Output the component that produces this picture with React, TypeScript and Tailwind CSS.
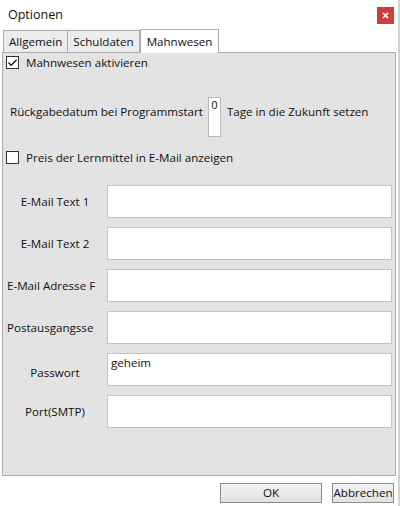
import { Check, X } from "lucide-react";

const fields = [
  { label: "E-Mail Text 1", value: "", align: "center" },
  { label: "E-Mail Text 2", value: "", align: "center" },
  { label: "E-Mail Adresse F", value: "", align: "left" },
  { label: "Postausgangsse", value: "", align: "left" },
  { label: "Passwort", value: "geheim", align: "center" },
  { label: "Port(SMTP)", value: "", align: "center" },
];

function Checkbox({ checked, label }: { checked: boolean; label: string }) {
  return (
    <div className="flex h-[17px] items-center gap-[7px]">
      <div className="flex h-[13px] w-[13px] items-center justify-center border border-[#333] bg-white">
        {checked && <Check className="h-[12px] w-[12px] text-[#1c1c3a]" strokeWidth={3.2} />}
      </div>
      <span>{label}</span>
    </div>
  );
}

export default function App() {
  return (
    <div
      className="relative flex h-[506px] w-[400px] flex-col overflow-hidden border-r-[2px] border-[#d4d4d4] bg-white text-[11.6px] leading-[17px] text-[#111]"
      style={{ fontFamily: '"Open Sans", "Noto Sans", sans-serif' }}
    >
      {/* Title bar */}
      <div className="flex h-[28px] items-start justify-between pl-[8px] pr-[4px] pt-[6px]">
        <span className="text-[12.5px]">Optionen</span>
        <div className="mt-[1px] flex h-[17px] w-[17px] items-center justify-center bg-[#c9403c]">
          <X className="h-[9px] w-[9px] text-white" strokeWidth={4} />
        </div>
      </div>

      {/* Tabs */}
      <div className="flex h-[24px] items-end pl-[3px]">
        <div className="flex h-[22px] items-center border border-b-0 border-[#acacac] bg-[#ececec] px-[5px]">
          Allgemein
        </div>
        <div className="flex h-[22px] items-center border border-b-0 border-l-0 border-[#acacac] bg-[#ececec] px-[5px]">
          Schuldaten
        </div>
        <div className="relative z-10 -mb-px flex h-[24px] items-center border border-b-0 border-[#acacac] bg-white px-[6px]">
          Mahnwesen
        </div>
      </div>

      {/* Panel */}
      <div className="mx-[2px] flex h-[424px] flex-col border border-[#acacac] bg-[#e3e3e3] pl-[3px] pr-[3px] pt-[1px]">
        <Checkbox checked label="Mahnwesen aktivieren" />

        <div className="mt-[26px] flex items-start pl-[4px]">
          <span className="mt-[6px]">Rückgabedatum bei Programmstart</span>
          <div className="ml-[5px] flex h-[40px] w-[13px] justify-center border border-[#b8b8b8] bg-white text-[11px] leading-[14px]">
            0
          </div>
          <span className="ml-[6px] mt-[6px]">Tage in die Zukunft setzen</span>
        </div>

        <div className="mt-[12px]">
          <Checkbox checked={false} label="Preis der Lernmittel in E-Mail anzeigen" />
        </div>

        <div className="mt-[19px] flex flex-col gap-[9px]">
          {fields.map((f) => (
            <div key={f.label} className="flex h-[33px] items-center">
              <div className="mr-[3px] w-[98px] overflow-hidden">
                <div
                  className={`whitespace-nowrap ${
                    f.align === "center" ? "text-center" : "pl-[1px] text-left"
                  } ${f.label === "Passwort" ? "mt-[5px]" : ""}`}
                >
                  {f.label}
                </div>
              </div>
              <div className="h-full flex-1 border border-[#c4c4c4] bg-white px-[3px] pt-[1px] leading-[16px]">
                {f.value}
              </div>
            </div>
          ))}
        </div>
      </div>

      {/* Buttons */}
      <div className="mt-[7px] flex justify-end gap-[10px] pr-[4px]">
        <button className="h-[20px] w-[102px] border border-[#8a8a8a] bg-gradient-to-b from-[#f3f3f3] to-[#e2e2e2] leading-[18px]">
          OK
        </button>
        <button className="h-[20px] w-[62px] border border-[#8a8a8a] bg-gradient-to-b from-[#f3f3f3] to-[#e2e2e2] leading-[18px]">
          Abbrechen
        </button>
      </div>
    </div>
  );
}
